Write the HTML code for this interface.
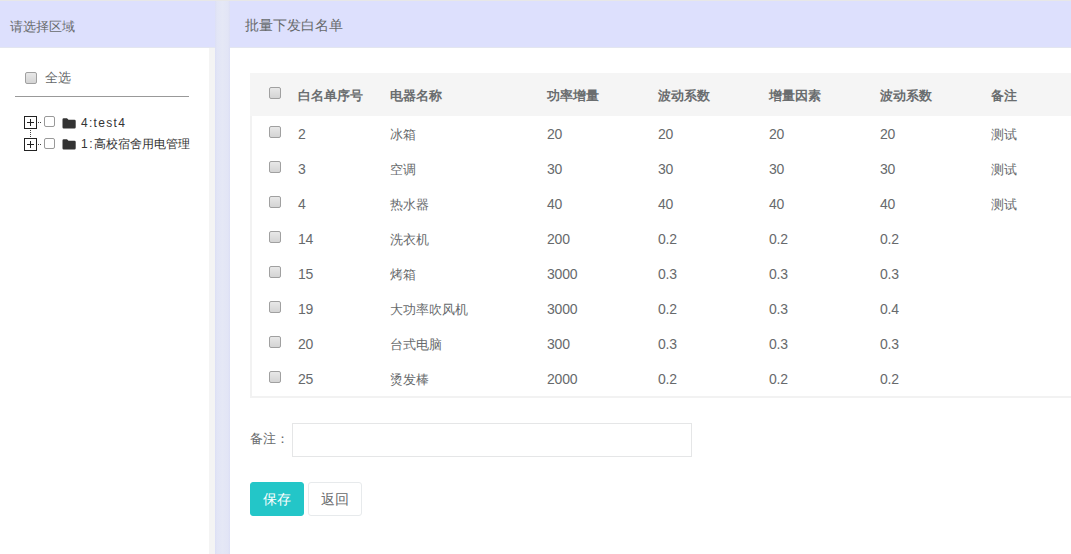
<!DOCTYPE html>
<html><head><meta charset="utf-8">
<style>
*{box-sizing:border-box;margin:0;padding:0}
html,body{width:1071px;height:554px;overflow:hidden;background:#fff;font-family:"Liberation Sans",sans-serif;font-size:13px;color:#676a6c}
.topline{position:absolute;left:0;top:0;width:1071px;height:1px;background:#e7e7e7}
.lhead{position:absolute;left:0;top:1px;width:215px;height:47px;background:#dde0fd;border-bottom:1px solid #e3e6f0}
.lhead span{position:absolute;left:10px;top:17px;font-size:13.2px}
.lgray{position:absolute;left:209px;top:48px;width:6px;height:506px;background:#f4f4f4}
.split{position:absolute;left:215px;top:1px;width:15px;height:553px;background:linear-gradient(to right,#dcdff5 0,#e2e5f6 2px,#e5e8f6 50%,#e2e5f6 13px,#dcdff5 15px)}
.rhead{position:absolute;left:230px;top:1px;width:841px;height:47px;background:#dde0fd;border-bottom:1px solid #e3e6f0}
.rhead span{position:absolute;left:15px;top:16px;font-size:14px}
.cb{position:absolute;width:12px;height:12px;border:1px solid #a0a0a0;border-radius:2px;background:linear-gradient(#e8e8e8,#d4d4d4)}
.t{position:absolute;white-space:nowrap}
.th{top:87px;font-weight:bold;color:#6a6d6f}
.td{color:#676a6c}
.num{color:#676a6c;font-size:14px;letter-spacing:-0.2px}
.table{position:absolute;left:250px;top:73px;width:830px;height:325px;border:2px solid #f2f2f2;border-width:0 0 2px 2px}
.thead{position:absolute;left:250px;top:73px;width:830px;height:43px;background:#f5f5f5}
.allline{position:absolute;left:15px;top:96px;width:174px;height:1px;background:#999}
.tbox{position:absolute;width:13px;height:13px;border:1px solid #222;background:#fff}
.tbox:before{content:"";position:absolute;left:2px;top:5px;width:7px;height:1px;background:#222}
.tbox:after{content:"";position:absolute;left:5px;top:2px;width:1px;height:7px;background:#222}
.tcb{position:absolute;width:11px;height:11px;border:1px solid #999;border-radius:2px;background:#fff}
.tt{position:absolute;font-size:12px;color:#333;white-space:nowrap}
.ls{letter-spacing:1.3px}
.remark{position:absolute;left:292px;top:423px;width:400px;height:34px;border:1px solid #e5e6e7;background:#fff}
.btn{position:absolute;top:482px;height:34px;border-radius:3px;font-size:14px;text-align:center;line-height:32px}
.save{left:250px;width:54px;background:#23c6c8;color:#fff;border:1px solid #23c6c8}
.back{left:308px;width:54px;background:#fff;color:#676a6c;border:1px solid #e7eaec}
</style></head><body>
<div class="topline"></div>
<div class="lhead"><span>请选择区域</span></div>
<div class="lgray"></div>
<div class="split"></div>
<div class="rhead"><span>批量下发白名单</span></div>

<div class="cb" style="left:25px;top:72px"></div>
<div class="t" style="left:45px;top:69px;color:#676a6c">全选</div>
<div class="allline"></div>

<div class="tbox" style="left:24px;top:116px"></div>
<div class="tbox" style="left:24px;top:138px"></div>
<svg style="position:absolute;left:0;top:0" width="80" height="160">
<g fill="#444">
<rect x="38" y="122" width="1" height="1"/><rect x="40" y="122" width="1" height="1"/>
<rect x="38" y="144" width="1" height="1"/><rect x="40" y="144" width="1" height="1"/>
<rect x="30" y="130" width="1" height="1"/><rect x="30" y="132" width="1" height="1"/><rect x="30" y="134" width="1" height="1"/><rect x="30" y="136" width="1" height="1"/>
</g>
<g fill="#333">
<path d="M62.5 119.5a1.2 1.2 0 0 1 1.2-1.2h3.3l1.5 1.5h6a1.2 1.2 0 0 1 1.2 1.2v6.3a1.2 1.2 0 0 1-1.2 1.2h-10.8a1.2 1.2 0 0 1-1.2-1.2z"/>
<path d="M62.5 140.5a1.2 1.2 0 0 1 1.2-1.2h3.3l1.5 1.5h6a1.2 1.2 0 0 1 1.2 1.2v6.3a1.2 1.2 0 0 1-1.2 1.2h-10.8a1.2 1.2 0 0 1-1.2-1.2z"/>
</g>
</svg>
<div class="tcb" style="left:44px;top:116px"></div>
<div class="tcb" style="left:44px;top:138px"></div>
<div class="tt ls" style="left:81px;top:116px">4:test4</div>
<div class="tt" style="left:81px;top:136px"><span class="ls" style="letter-spacing:1.5px">1:</span>高校宿舍用电管理</div>

<div class="table"></div>
<div class="thead"></div>
<div class="cb" style="left:269px;top:87px"></div>
<div class="t th" style="left:298px">白名单序号</div>
<div class="t th" style="left:390px">电器名称</div>
<div class="t th" style="left:547px">功率增量</div>
<div class="t th" style="left:658px">波动系数</div>
<div class="t th" style="left:769px">增量因素</div>
<div class="t th" style="left:880px">波动系数</div>
<div class="t th" style="left:991px">备注</div>
<div class="cb" style="left:269px;top:126px"></div>
<div class="t num" style="left:298px;top:126px">2</div>
<div class="t td" style="left:390px;top:126px">冰箱</div>
<div class="t num" style="left:547px;top:126px">20</div>
<div class="t num" style="left:658px;top:126px">20</div>
<div class="t num" style="left:769px;top:126px">20</div>
<div class="t num" style="left:880px;top:126px">20</div>
<div class="t td" style="left:991px;top:126px">测试</div>
<div class="cb" style="left:269px;top:161px"></div>
<div class="t num" style="left:298px;top:161px">3</div>
<div class="t td" style="left:390px;top:161px">空调</div>
<div class="t num" style="left:547px;top:161px">30</div>
<div class="t num" style="left:658px;top:161px">30</div>
<div class="t num" style="left:769px;top:161px">30</div>
<div class="t num" style="left:880px;top:161px">30</div>
<div class="t td" style="left:991px;top:161px">测试</div>
<div class="cb" style="left:269px;top:196px"></div>
<div class="t num" style="left:298px;top:196px">4</div>
<div class="t td" style="left:390px;top:196px">热水器</div>
<div class="t num" style="left:547px;top:196px">40</div>
<div class="t num" style="left:658px;top:196px">40</div>
<div class="t num" style="left:769px;top:196px">40</div>
<div class="t num" style="left:880px;top:196px">40</div>
<div class="t td" style="left:991px;top:196px">测试</div>
<div class="cb" style="left:269px;top:231px"></div>
<div class="t num" style="left:298px;top:231px">14</div>
<div class="t td" style="left:390px;top:231px">洗衣机</div>
<div class="t num" style="left:547px;top:231px">200</div>
<div class="t num" style="left:658px;top:231px">0.2</div>
<div class="t num" style="left:769px;top:231px">0.2</div>
<div class="t num" style="left:880px;top:231px">0.2</div>
<div class="cb" style="left:269px;top:266px"></div>
<div class="t num" style="left:298px;top:266px">15</div>
<div class="t td" style="left:390px;top:266px">烤箱</div>
<div class="t num" style="left:547px;top:266px">3000</div>
<div class="t num" style="left:658px;top:266px">0.3</div>
<div class="t num" style="left:769px;top:266px">0.3</div>
<div class="t num" style="left:880px;top:266px">0.3</div>
<div class="cb" style="left:269px;top:301px"></div>
<div class="t num" style="left:298px;top:301px">19</div>
<div class="t td" style="left:390px;top:301px">大功率吹风机</div>
<div class="t num" style="left:547px;top:301px">3000</div>
<div class="t num" style="left:658px;top:301px">0.2</div>
<div class="t num" style="left:769px;top:301px">0.3</div>
<div class="t num" style="left:880px;top:301px">0.4</div>
<div class="cb" style="left:269px;top:336px"></div>
<div class="t num" style="left:298px;top:336px">20</div>
<div class="t td" style="left:390px;top:336px">台式电脑</div>
<div class="t num" style="left:547px;top:336px">300</div>
<div class="t num" style="left:658px;top:336px">0.3</div>
<div class="t num" style="left:769px;top:336px">0.3</div>
<div class="t num" style="left:880px;top:336px">0.3</div>
<div class="cb" style="left:269px;top:371px"></div>
<div class="t num" style="left:298px;top:371px">25</div>
<div class="t td" style="left:390px;top:371px">烫发棒</div>
<div class="t num" style="left:547px;top:371px">2000</div>
<div class="t num" style="left:658px;top:371px">0.2</div>
<div class="t num" style="left:769px;top:371px">0.2</div>
<div class="t num" style="left:880px;top:371px">0.2</div>
<div class="t" style="left:250px;top:430px;color:#676a6c">备注：</div>
<div class="remark"></div>
<div class="btn save">保存</div>
<div class="btn back">返回</div>
</body></html>
